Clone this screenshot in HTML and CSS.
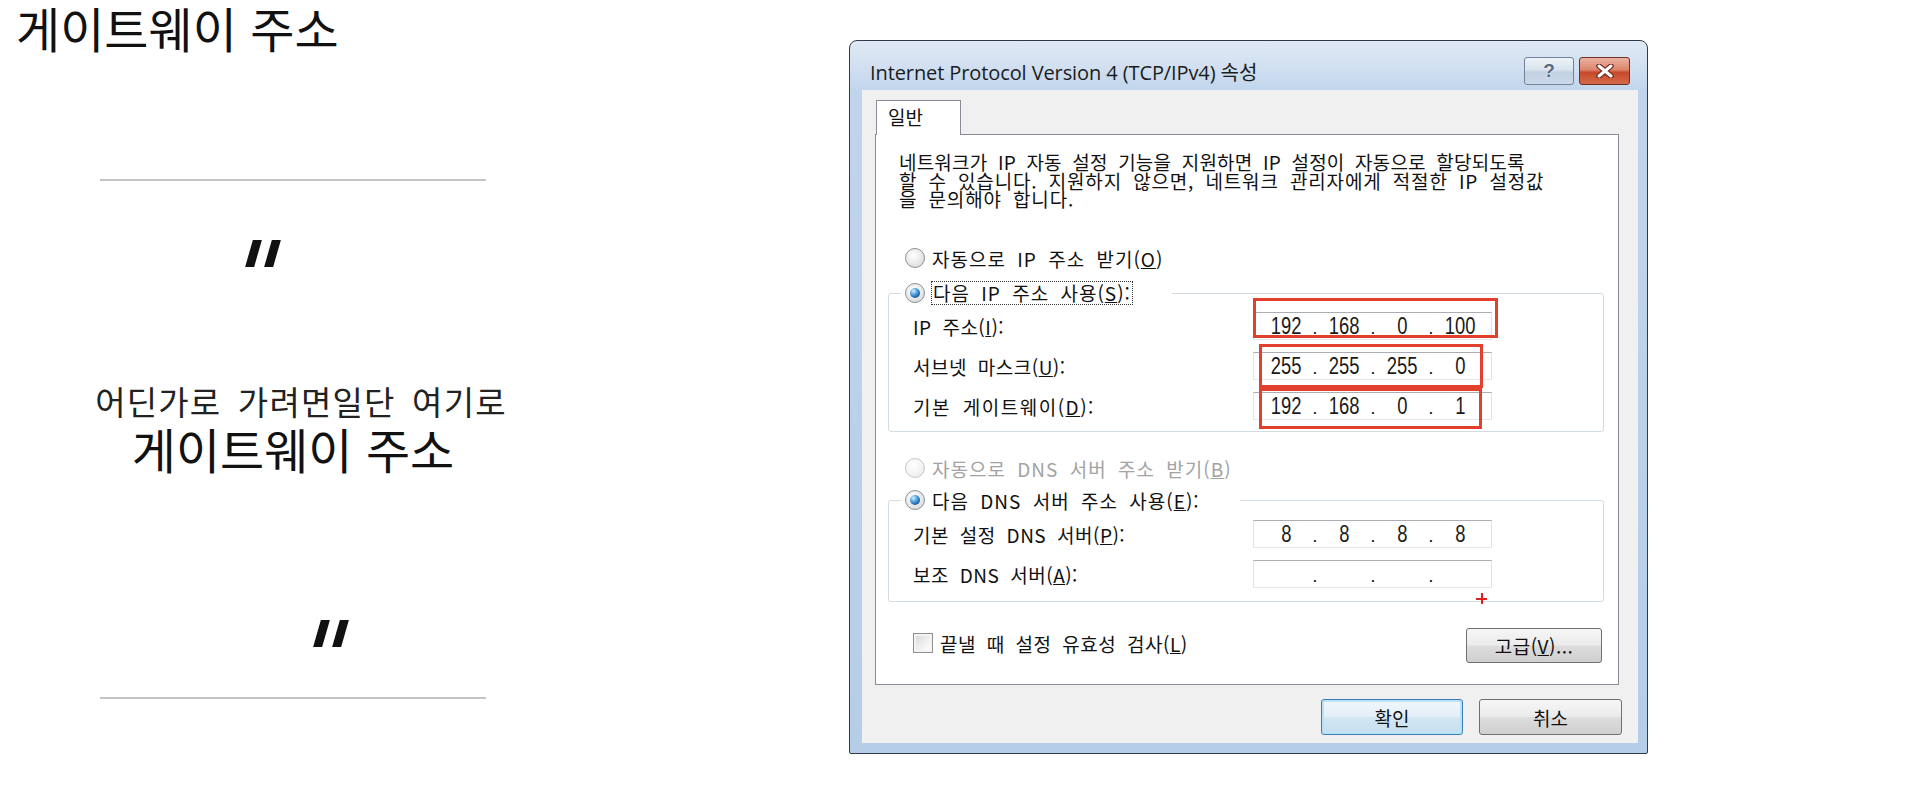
FILE: index.html
```html
<!DOCTYPE html>
<html lang="ko">
<head>
<meta charset="utf-8">
<title>게이트웨이 주소</title>
<link rel="stylesheet" href="styles.css">
</head>
<body>
<div class="page">
  <section class="left">
    <h1 class="heading">게이트웨이 주소</h1>
    <div class="card">
      <div class="rule"></div>
      <div class="quote quote-open"><span></span><span></span></div>
      <p class="caption">어딘가로 가려면일단 여기로</p>
      <p class="caption-big">게이트웨이 주소</p>
      <div class="quote quote-close"><span></span><span></span></div>
      <div class="rule rule-bottom"></div>
    </div>
  </section>

  <div class="dialog">
    <div class="titlebar">
      <span class="title">Internet Protocol Version 4 (TCP/IPv4) 속성</span>
      <div class="tb-buttons">
        <span class="tb-btn tb-help">?</span>
        <span class="tb-btn tb-close">
          <svg width="20" height="14" viewBox="0 0 20 14">
            <path d="M4 2 L16 12 M16 2 L4 12" stroke="#6e2a1c" stroke-width="5.5" stroke-linecap="round"/>
            <path d="M4 2 L16 12 M16 2 L4 12" stroke="#ffffff" stroke-width="3" stroke-linecap="round"/>
          </svg>
        </span>
      </div>
    </div>

    <div class="client">
      <div class="tabs"><span class="tab">일반</span></div>
      <div class="panel">
        <p class="desc">네트워크가 IP 자동 설정 기능을 지원하면 IP 설정이 자동으로 할당되도록<br><span class="desc-wide">할 수 있습니다. 지원하지 않으면, 네트워크 관리자에게 적절한 IP 설정값<br>을 문의해야 합니다.</span></p>

        <div class="radio-row radio-first"><span class="radio"></span><span>자동으로 IP 주소 받기(<u>O</u>)</span></div>

        <fieldset class="group group-ip">
          <legend class="legend"><span class="radio-row"><span class="radio checked"></span><span class="focus">다음 IP 주소 사용(<u>S</u>):</span></span></legend>
          <div class="rows">
            <span class="label">IP 주소(<u>I</u>):</span>
            <div class="ipbox"><span class="oct"><span>192</span></span><span class="dot">.</span><span class="oct"><span>168</span></span><span class="dot">.</span><span class="oct"><span>0</span></span><span class="dot">.</span><span class="oct"><span>100</span></span></div>
            <span class="label">서브넷 마스크(<u>U</u>):</span>
            <div class="ipbox"><span class="oct"><span>255</span></span><span class="dot">.</span><span class="oct"><span>255</span></span><span class="dot">.</span><span class="oct"><span>255</span></span><span class="dot">.</span><span class="oct"><span>0</span></span></div>
            <span class="label label-wide">기본 게이트웨이(<u>D</u>):</span>
            <div class="ipbox"><span class="oct"><span>192</span></span><span class="dot">.</span><span class="oct"><span>168</span></span><span class="dot">.</span><span class="oct"><span>0</span></span><span class="dot">.</span><span class="oct"><span>1</span></span></div>
          </div>
        </fieldset>

        <div class="radio-row radio-dns disabled"><span class="radio"></span><span>자동으로 DNS 서버 주소 받기(<u>B</u>)</span></div>

        <fieldset class="group group-dns">
          <legend class="legend legend-dns"><span class="radio-row"><span class="radio checked"></span><span>다음 DNS 서버 주소 사용(<u>E</u>):</span></span></legend>
          <div class="rows">
            <span class="label">기본 설정 DNS 서버(<u>P</u>):</span>
            <div class="ipbox"><span class="oct"><span>8</span></span><span class="dot">.</span><span class="oct"><span>8</span></span><span class="dot">.</span><span class="oct"><span>8</span></span><span class="dot">.</span><span class="oct"><span>8</span></span></div>
            <span class="label">보조 DNS 서버(<u>A</u>):</span>
            <div class="ipbox"><span class="oct"></span><span class="dot">.</span><span class="oct"></span><span class="dot">.</span><span class="oct"></span><span class="dot">.</span><span class="oct"></span></div>
          </div>
        </fieldset>

        <div class="options">
          <span class="check-row"><span class="checkbox"></span><span>끝낼 때 설정 유효성 검사(<u>L</u>)</span></span>
          <span class="btn btn-adv">고급(<u>V</u>)...</span>
        </div>
      </div>

      <div class="actions">
        <span class="btn btn-ok">확인</span>
        <span class="btn btn-cancel">취소</span>
      </div>
    </div>

    <div class="mark mark-1"></div>
    <div class="mark mark-2"></div>
    <div class="mark mark-3"></div>
    <div class="cursor-plus"></div>
  </div>
</div>
</body>
</html>
```

FILE: styles.css
```css
* { box-sizing: border-box; }
html, body { margin: 0; background: #ffffff; }
body {
  font-family: "Noto Sans CJK KR", "Noto Sans", sans-serif;
  color: #111111;
}

.page {
  display: flex;
  align-items: flex-start;
  padding-left: 16px;
}

/* ---------- left slide column ---------- */
.left { width: 833px; flex: none; }
.heading {
  margin: 0;
  font-size: 48px;
  font-weight: 400;
  line-height: 54px;
  height: 54px;
  color: #111;
  white-space: nowrap;
}
.card { width: 386px; margin: 125px 0 0 84px; }
.rule { height: 2px; background: #c4c4c4; }
.quote { display: flex; gap: 10px; height: 27px; }
.quote span {
  width: 9px;
  height: 100%;
  background: #111;
  transform: skewX(-16deg);
}
.quote-open { margin: 59px 0 0 149px; }
.caption {
  margin: 115px -28px 0 -12px;
  font-size: 33px;
  line-height: 38px;
  letter-spacing: 1.2px;
  word-spacing: 6px;
  text-align: center;
  color: #222;
  white-space: nowrap;
}
.caption-big {
  margin: 0 -20px;
  font-size: 48px;
  line-height: 56px;
  text-align: center;
  color: #111;
  white-space: nowrap;
}
.quote-close { margin: 144px 0 0 217px; height: 27px; }
.rule-bottom { margin-top: 50px; }

/* ---------- dialog ---------- */
.dialog {
  position: relative;
  flex: none;
  width: 799px;
  margin-top: 40px;
  border: 1px solid #2e3b49;
  border-radius: 8px 8px 2px 2px;
  background: linear-gradient(to bottom, #dfe9f5 0, #cfdef0 30px, #c0d5ec 50px, #b6cde8 100%);
  padding: 0 9px 10px 12px;
}
.titlebar {
  height: 49px;
  padding: 16px 8px 5px 8px;
  display: flex;
  align-items: center;
  justify-content: space-between;
}
.title {
  font-family: "Open Sans", "Noto Sans CJK KR", sans-serif;
  font-size: 20px;
  letter-spacing: -0.1px;
  color: #1b1b1b;
  padding-top: 1px;
}
.tb-buttons { display: flex; gap: 5px; }
.tb-btn {
  height: 28px;
  border-radius: 3px;
  display: flex;
  align-items: center;
  justify-content: center;
}
.tb-help {
  width: 50px;
  border: 1px solid #71839a;
  background: linear-gradient(to bottom, #eef3f9 0, #d9e3ee 45%, #c2d1e2 55%, #cad8e8 100%);
  font-family: "Liberation Sans", sans-serif;
  font-weight: 700;
  font-size: 19px;
  color: #566a82;
  text-shadow: 0 0 2px #ffffff, 0 0 1px #ffffff;
}
.tb-close {
  width: 51px;
  border: 1px solid #6e3124;
  background: linear-gradient(to bottom, #eab1a1 0, #dc866c 45%, #c8492e 55%, #d46a47 100%);
}

.client {
  height: 653px;
  background: #f0f0f0;
  padding: 10px 0 8px;
  display: flex;
  flex-direction: column;
}
.tabs { height: 34px; padding-left: 14px; display: flex; }
.tab {
  position: relative;
  z-index: 1;
  width: 85px;
  height: 35px;
  border: 1px solid #898c95;
  border-bottom: none;
  background: #ffffff;
  padding-left: 11px;
  font-size: 19px;
  line-height: 32px;
  color: #111;
}
.panel {
  margin-left: 13px;
  width: 744px;
  height: 551px;
  border: 1px solid #898c95;
  background: #ffffff;
  font-size: 19px;
  letter-spacing: 0.5px;
  word-spacing: 5px;
}
.desc {
  margin: 18px 0 0 23px;
  line-height: 18.5px;
  white-space: nowrap;
  letter-spacing: 0.2px;
  color: #111;
}
.desc-wide { letter-spacing: 0.85px; }
.radio-row {
  display: flex;
  align-items: center;
  gap: 7px;
  height: 24px;
  white-space: nowrap;
  letter-spacing: 1px;
  color: #111;
}
.radio-first { margin: 37.5px 0 0 29px; }
.radio-dns { margin: 24px 0 0 29px; }
.disabled { color: #a3a3a3; }
.radio {
  position: relative;
  flex: none;
  width: 20px;
  height: 20px;
  border-radius: 50%;
  border: 1px solid #8d8f91;
  background: radial-gradient(circle at 40% 35%, #ffffff 0, #ececec 45%, #d2d2d2 100%);
}
.disabled .radio {
  border-color: #c6c8ca;
  background: radial-gradient(circle at 40% 35%, #ffffff 0, #f4f4f4 50%, #e6e6e6 100%);
}
.radio.checked::after {
  content: "";
  position: absolute;
  left: 4px;
  top: 4px;
  width: 10px;
  height: 10px;
  border-radius: 50%;
  background: radial-gradient(circle at 35% 30%, #d6f1ff 0, #5aa8e6 35%, #1d5fa8 70%, #0e3b73 100%);
}
.focus { outline: 1px dotted #333; outline-offset: 0; padding: 0 1px; line-height: 22px; }

.group {
  margin: 11px 14px 0 12px;
  min-width: 0;
  border: 1px solid #d3dbe2;
  border-radius: 3px;
  padding: 7px 0 11px 24px;
}
.group-dns { margin-top: 8px; padding: 8px 0 13px 24px; }
.legend {
  margin-left: -12px;
  padding: 0 40px 0 4px;
  height: 24px;
}
.legend-dns { padding-right: 40px; }
.rows {
  display: grid;
  grid-template-columns: 340px 239px;
  grid-auto-rows: 28px;
  row-gap: 12px;
  align-items: center;
}
.label { white-space: nowrap; color: #111; }
.label-wide { letter-spacing: 1.5px; }
.ipbox {
  height: 28px;
  display: flex;
  align-items: center;
  padding-left: 6px;
  border: 1px solid;
  border-color: #abadb3 #dfe3e8 #e3e9ef #e2e3ea;
  background: #fff;
  font-family: "Liberation Sans", sans-serif;
  font-size: 23px;
  letter-spacing: 0;
  word-spacing: 0;
  color: #1a1a1a;
}
.oct {
  width: 52px;
  height: 26px;
  display: flex;
  align-items: center;
  justify-content: center;
}
.oct span { display: inline-block; transform: scaleX(0.8); }
.dot {
  width: 6px;
  height: 26px;
  display: flex;
  align-items: center;
  justify-content: center;
  font-size: 19px;
  padding-top: 3px;
}

.options {
  margin-top: 26px;
  height: 35px;
  padding: 0 16px 0 37px;
  display: flex;
  align-items: center;
  justify-content: space-between;
}
.check-row { display: flex; align-items: center; gap: 7px; margin-top: -5px; white-space: nowrap; }
.checkbox {
  width: 20px;
  height: 20px;
  border: 1px solid #8f8f8f;
  background: linear-gradient(135deg, #d6d6d6 0, #f2f2f2 60%, #ffffff 100%);
  box-shadow: inset 0 0 0 2px #f3f3f3;
}
.btn {
  display: flex;
  align-items: center;
  justify-content: center;
  border-radius: 3px;
  border: 1px solid #707070;
  background: linear-gradient(to bottom, #f6f6f6 0, #ebebeb 48%, #dddddd 52%, #cfcfcf 100%);
  font-size: 19px;
  color: #111;
  white-space: nowrap;
}
.btn-adv { width: 136px; height: 35px; letter-spacing: 0.5px; }
.actions {
  margin-top: 14px;
  padding-right: 16px;
  display: flex;
  justify-content: flex-end;
  gap: 16px;
}
.btn-ok {
  width: 142px;
  height: 36px;
  border: 1px solid #3c7fb1;
  box-shadow: inset 0 0 0 2px #b9e2f8;
  background: linear-gradient(to bottom, #f0f7fc 0, #e3eff8 48%, #d3e6f3 52%, #c6dff0 100%);
}
.btn-cancel { width: 143px; height: 36px; }

/* annotations drawn over the dialog */
.mark {
  position: absolute;
  border: 3px solid #e2402c;
}
.mark-1 { left: 403px; top: 257px; width: 245px; height: 40px; }
.mark-2 { left: 409px; top: 303px; width: 224px; height: 44px; }
.mark-3 { left: 409px; top: 347px; width: 223px; height: 41px; }
.cursor-plus {
  position: absolute;
  left: 626px;
  top: 552px;
  width: 11px;
  height: 11px;
  background:
    linear-gradient(#e0201a, #e0201a) center / 11px 2px no-repeat,
    linear-gradient(#e0201a, #e0201a) center / 2px 11px no-repeat;
}
```
